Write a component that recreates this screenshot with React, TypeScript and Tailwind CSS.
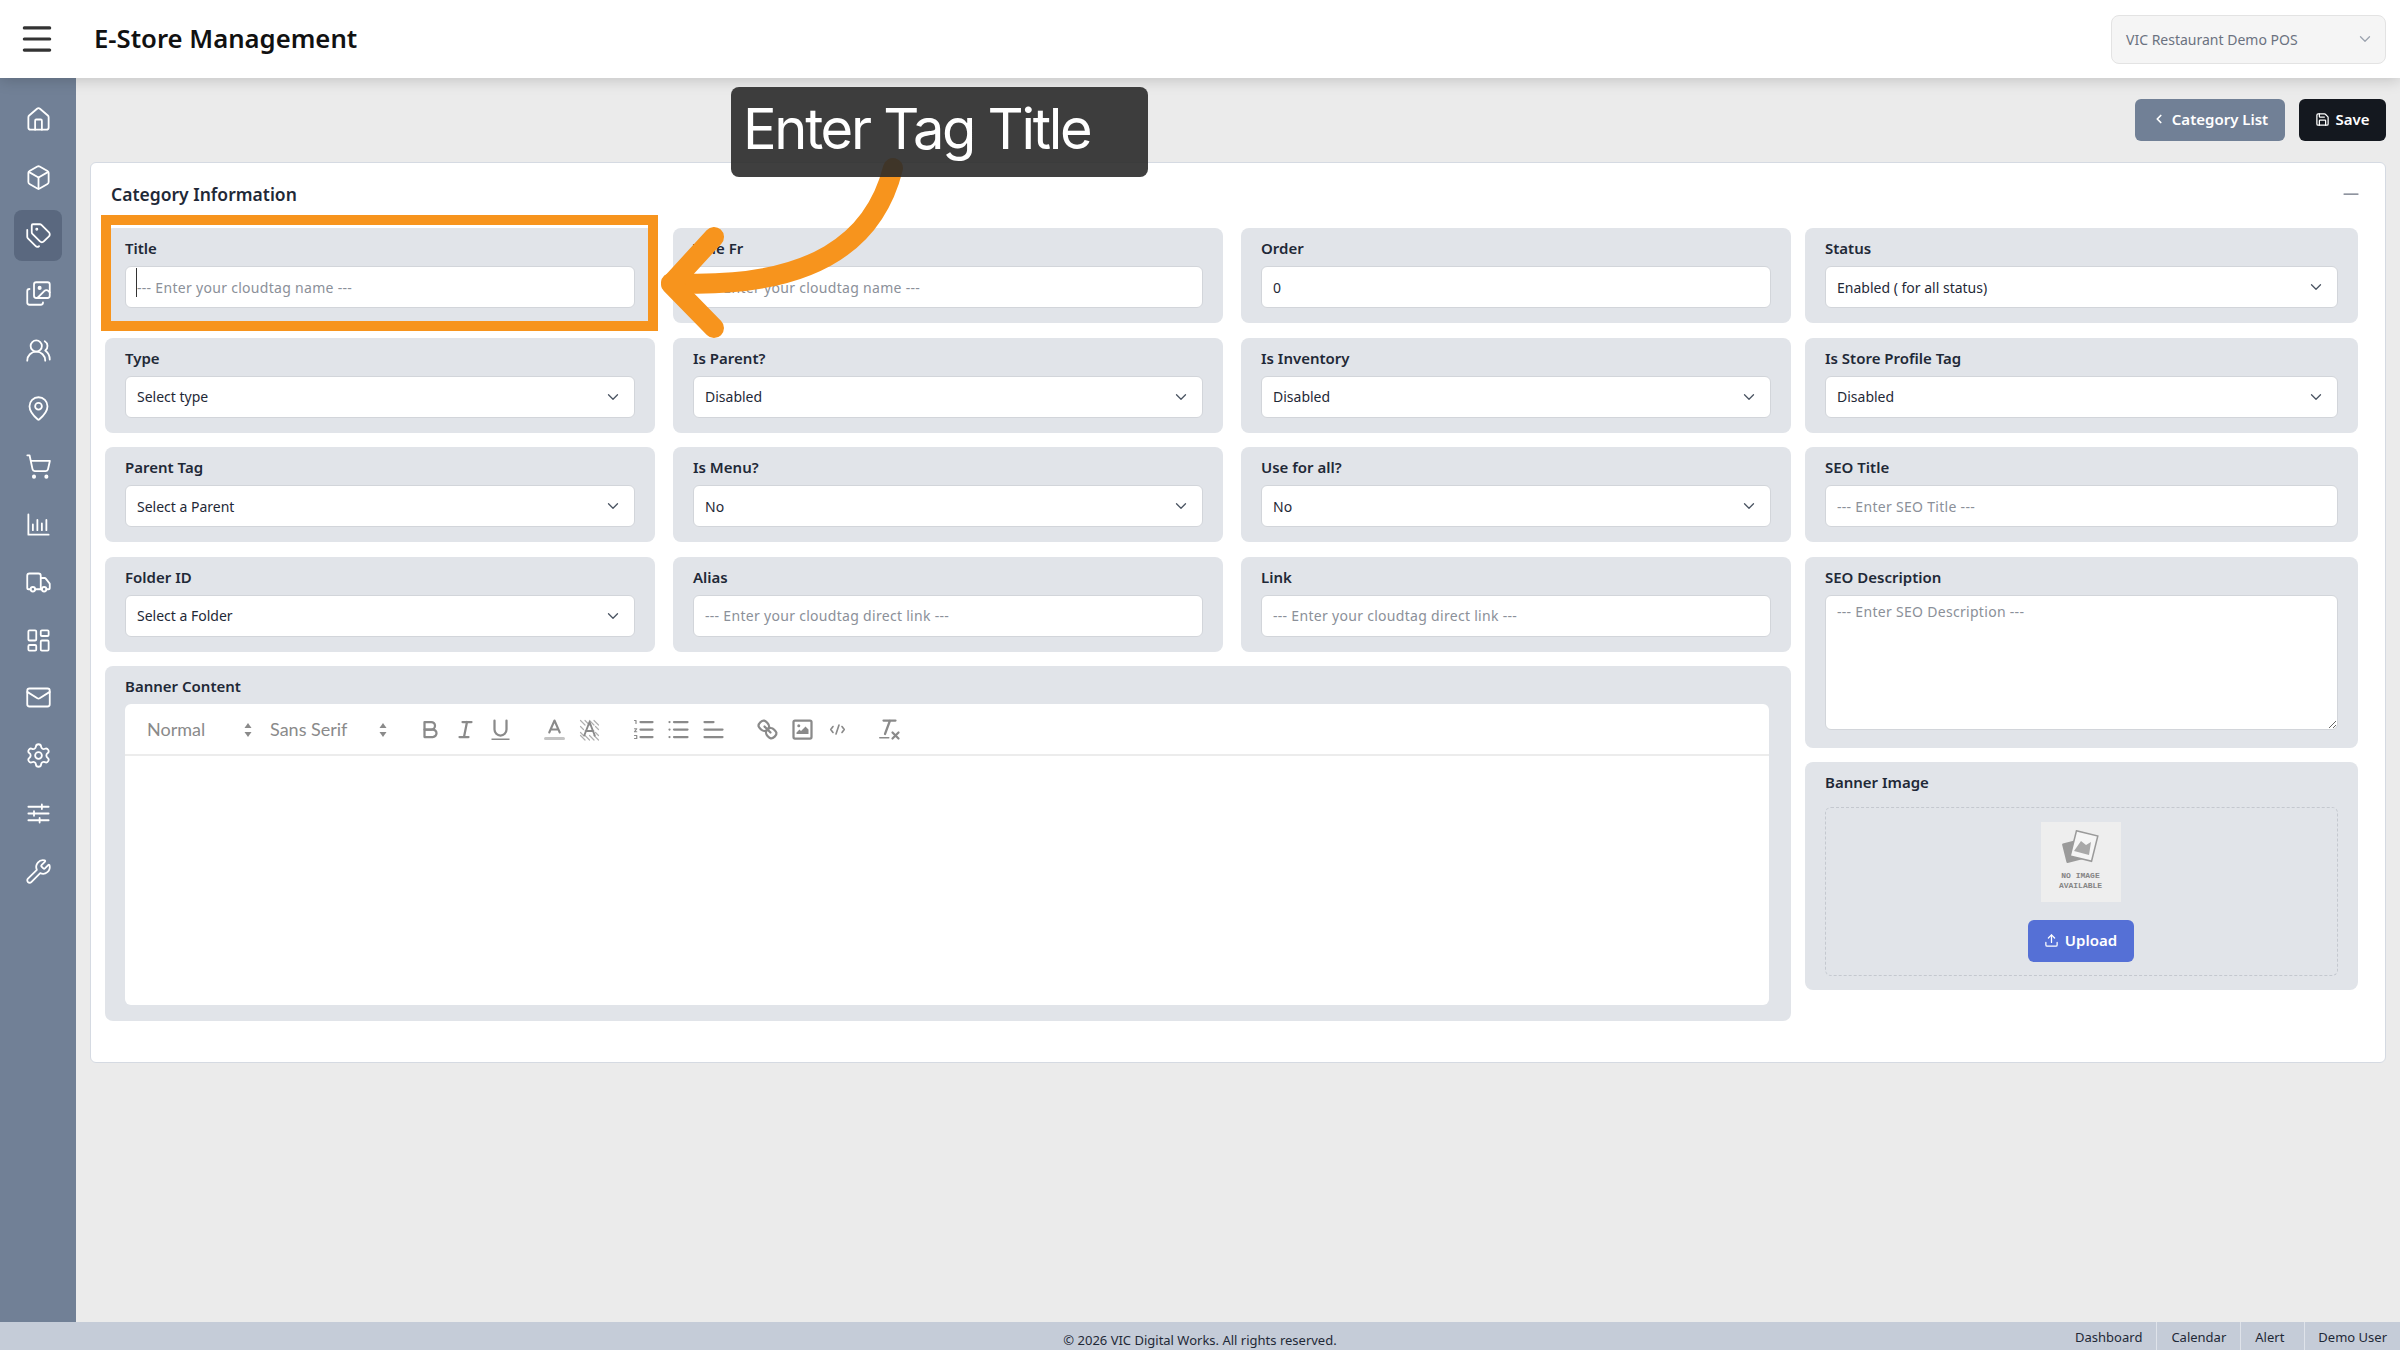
import {
  House,
  Box,
  Tags,
  Images,
  UsersRound,
  MapPin,
  ShoppingCart,
  Truck,
  LayoutDashboard,
  Mail,
  Settings,
  Wrench,
  ChevronDown,
  ChevronLeft,
  Save,
  Upload,
  Menu,
  Minus,
} from 'lucide-react';
import type { ComponentProps, ReactNode } from 'react';

const ChartBars = (props: ComponentProps<'svg'>) => (
  <svg viewBox="0 0 24 24" fill="none" stroke="currentColor" strokeLinecap="round" strokeLinejoin="round" {...props}>
    <path d="M3 3v18h18M7 17v-5M11 17V8M15 17v-6M19 17V8" />
  </svg>
);

const Sliders = (props: ComponentProps<'svg'>) => (
  <svg viewBox="0 0 24 24" fill="none" stroke="currentColor" strokeLinecap="round" strokeLinejoin="round" {...props}>
    <path d="M3 6h18M3 12h18M3 18h18M15 4v4M8 10v4M13 16v4" />
  </svg>
);

const sidebarIcons = [House, Box, Tags, Images, UsersRound, MapPin, ShoppingCart, ChartBars, Truck, LayoutDashboard, Mail, Settings, Sliders, Wrench];

const Cell = ({
  label,
  children,
  className = 'pb-[15px]',
  labelGap = 'mb-[8px]',
}: {
  label: string;
  children: ReactNode;
  className?: string;
  labelGap?: string;
}) => (
  <div className={`rounded-lg bg-[#e1e4e9] px-[20px] pt-[10px] ${className}`}>
    <div className={`h-[20px] text-[15px] leading-[20px] font-semibold text-[#1f2937] ${labelGap}`}>{label}</div>
    {children}
  </div>
);

const TextField = ({ placeholder, value }: { placeholder?: string; value?: string }) => (
  <input
    readOnly
    placeholder={placeholder}
    defaultValue={value}
    className="block h-[42px] w-full rounded-md border border-[#d2d5da] bg-white px-[11px] text-[14px] text-[#1f2937] outline-none placeholder:tracking-[0.3px] placeholder:text-[#8b9099]"
  />
);

const SelectField = ({ value }: { value: string }) => (
  <div className="flex h-[42px] w-full items-center justify-between rounded-md border border-[#d2d5da] bg-white pr-[12px] pl-[11px] text-[14px] text-[#1f2937]">
    <span>{value}</span>
    <ChevronDown className="h-[18px] w-[18px] text-[#4b5563]" strokeWidth={1.75} />
  </div>
);

// toolbar glyphs, same 18x18 grid the quill editor uses
const QIcon = ({ children }: { children: ReactNode }) => (
  <span className="flex w-[35px] justify-center">
    <svg viewBox="0 0 18 18" className="h-[27px] w-[27px]" fill="none" stroke="#8a8a8a" strokeWidth="1.5" strokeLinecap="round" strokeLinejoin="round">
      {children}
    </svg>
  </span>
);

const PickerArrows = () => (
  <svg viewBox="0 0 10 18" className="h-[18px] w-[10px]" fill="#8a8a8a">
    <path d="M5 2 L8.5 7 H1.5 Z" />
    <path d="M5 16 L8.5 11 H1.5 Z" />
  </svg>
);

const Toolbar = () => (
  <div className="flex h-[52px] items-center border-b-2 border-[#ececec] pt-[1px] pl-[22px] text-[18px] text-[#8a8a8a] [font-family:Lato,sans-serif]">
    <div className="flex w-[123px] items-center justify-between pr-[17px]">
      <span>Normal</span>
      <PickerArrows />
    </div>
    <div className="flex w-[143px] items-center justify-between pr-[25px]">
      <span>Sans Serif</span>
      <PickerArrows />
    </div>
    <div className="flex">
      <QIcon>
        <path d="M5,4H9.5A2.5,2.5,0,0,1,12,6.5v0A2.5,2.5,0,0,1,9.5,9H5V4Z" />
        <path d="M5,9h5.5A2.5,2.5,0,0,1,13,11.5v0A2.5,2.5,0,0,1,10.5,14H5V9Z" />
      </QIcon>
      <QIcon>
        <path d="M7 4H13M5 14H11M8 14L10 4" />
      </QIcon>
      <QIcon>
        <path d="M5,3V9a4,4,0,0,0,4,4H9a4,4,0,0,0,4-4V3" />
        <rect x="3" y="15" width="12" height="1" fill="#8a8a8a" stroke="none" />
      </QIcon>
    </div>
    <div className="ml-[19px] flex">
      <QIcon>
        <path d="M5.5 11L9 3L12.5 11M11.6 9H6.4" strokeWidth="1.4" />
        <path d="M3 15H15" stroke="#c4c4c4" strokeWidth="2" />
      </QIcon>
      <QIcon>
        <path d="M3 3L6 6M6 3L9 6M9 3L12 6M12 3L15 6M3 7L5 9M13 7L15 9M3 11L5 13M13 11L15 13M3 13L6 16M6 13L9 16M9 13L12 16M12 13L15 16" stroke="#b0b0b0" strokeWidth="0.8" />
        <path d="M5.5 13L9 4L12.5 13M11.6 10H6.4" strokeWidth="1.3" />
      </QIcon>
    </div>
    <div className="ml-[19px] flex">
      <QIcon>
        <path d="M7 4H15M7 9H15M7 14H15" />
        <path d="M3 3H4V5M3 8.5H4.5L3 10.5H4.5M3 13H4.5V15H3" strokeWidth="0.8" />
      </QIcon>
      <QIcon>
        <path d="M6 4H15M6 9H15M6 14H15M3 4H3.01M3 9H3.01M3 14H3.01" />
      </QIcon>
      <QIcon>
        <path d="M3 4H9M3 9H15M3 14H15" />
      </QIcon>
    </div>
    <div className="ml-[19px] flex">
      <QIcon>
        <path d="M7 7L11 11" />
        <path d="M8.9,4.577a3.476,3.476,0,0,1,.36,4.679A3.476,3.476,0,0,1,4.577,8.9C3.185,7.5,2.035,6.4,4.217,4.217S7.5,3.185,8.9,4.577Z" />
        <path d="M13.423,9.1a3.476,3.476,0,0,0-4.679-.36,3.476,3.476,0,0,0,.36,4.679c1.392,1.392,2.5,2.542,4.679.36S14.815,10.5,13.423,9.1Z" />
      </QIcon>
      <QIcon>
        <rect x="3" y="3" width="12" height="12" rx="1" />
        <circle cx="6.5" cy="6.5" r="1" fill="#8a8a8a" stroke="none" />
        <polyline points="5 12 5 11 7 9 8 10 11 7 13 9 13 12 5 12" fill="#8a8a8a" stroke="none" />
      </QIcon>
      <QIcon>
        <path d="M6 7L4.5 9L6 11M12 7L13.5 9L12 11M10 6L8 12" strokeWidth="1.1" />
      </QIcon>
    </div>
    <div className="ml-[17px] flex">
      <QIcon>
        <path d="M5 3H13M6 12L9.35 3M11 11L15 15M15 11L11 15" />
        <rect x="2" y="14" width="7" height="1" rx="0.5" fill="#8a8a8a" stroke="none" />
      </QIcon>
    </div>
  </div>
);

const NoImage = () => (
  <div className="flex h-[80px] w-[80px] flex-col items-center bg-[#eeeeee] pt-[8px]">
    <svg viewBox="0 0 40 36" className="h-[36px] w-[40px]">
      <rect x="3" y="11" width="20" height="20" rx="1" fill="#9a9a9a" transform="rotate(-14 13 21)" />
      <rect x="12" y="3" width="22" height="26" fill="#f5f5f5" stroke="#9a9a9a" strokeWidth="1.5" transform="rotate(14 23 16)" />
      <path d="M13 21L20 11L25 15L30 12L28 25Z" fill="#a8a8a8" />
    </svg>
    <div className="mt-[5px] text-center text-[8px] leading-[10px] font-bold text-[#858585] [font-family:'Liberation_Mono',monospace]">
      NO IMAGE
      <br />
      AVAILABLE
    </div>
  </div>
);

export default function App() {
  return (
    <div className="relative flex h-[1350px] w-full flex-col overflow-hidden bg-[#ebebeb] [font-family:'Noto_Sans',sans-serif]">
      <header className="relative z-10 flex h-[78px] shrink-0 items-center justify-between bg-white pr-[14px] pl-[18px] shadow-[0_2px_14px_rgba(0,0,0,0.18)]">
        <div className="flex items-center">
          <Menu className="h-[38px] w-[38px] text-[#333333]" strokeWidth={2} />
          <h1 className="ml-[38px] text-[25.7px] font-semibold text-[#111111]">E-Store Management</h1>
        </div>
        <div className="flex h-[49px] w-[275px] items-center justify-between rounded-lg border border-[#e3e3e3] bg-[#f5f5f5] pr-[11px] pl-[14px] text-[14px] text-[#6b7280]">
          <span>VIC Restaurant Demo POS</span>
          <ChevronDown className="h-[18px] w-[18px] text-[#9ca3af]" strokeWidth={1.75} />
        </div>
      </header>

      <div className="flex min-h-0 flex-1">
        <aside className="flex w-[76px] shrink-0 flex-col items-center gap-[6.85px] bg-[#718096] pt-[16px]">
          {sidebarIcons.map((Icon, idx) => (
            <div key={idx} className={`flex h-[51px] w-[48px] items-center justify-center rounded-lg ${idx === 2 ? 'bg-[#5a687f]' : ''}`}>
              <Icon className="h-[27px] w-[27px] text-white" strokeWidth={1.6} />
            </div>
          ))}
        </aside>

        <main className="flex-1 pt-[21px] pr-[14px] pl-[14px]">
          <div className="flex h-[42px] justify-end gap-[14px]">
            <button className="flex w-[150px] items-center justify-center gap-[6px] rounded-md bg-[#718096] pb-[2px] text-[15px] font-semibold text-white">
              <ChevronLeft className="h-[14px] w-[14px]" strokeWidth={3} />
              Category List
            </button>
            <button className="flex w-[87px] items-center justify-center gap-[5px] rounded-md bg-[#14181f] pb-[2px] text-[15px] font-semibold text-white">
              <Save className="h-[15px] w-[15px]" strokeWidth={2} />
              Save
            </button>
          </div>

          <section className="mt-[21px] h-[901px] rounded-md border border-[#d5dae2] bg-white pt-[18px] pr-[27px] pl-[14px]">
            <div className="flex h-[26px] items-center justify-between pl-[6px]">
              <h2 className="text-[17.5px] leading-[26px] font-semibold text-[#1f2937]">Category Information</h2>
              <Minus className="mr-[-5px] h-[24px] w-[24px] text-[#6b7280]" strokeWidth={1.25} />
            </div>

            <div className="mt-[21px] flex gap-[14px]">
              <div className="grid w-[1686px] shrink-0 grid-cols-3 gap-x-[18px] gap-y-[14.5px]">
                <Cell label="Title">
                  <TextField placeholder="--- Enter your cloudtag name ---" />
                </Cell>
                <Cell label="Title Fr">
                  <TextField placeholder="--- Enter your cloudtag name ---" />
                </Cell>
                <Cell label="Order">
                  <TextField value="0" />
                </Cell>
                <Cell label="Type">
                  <SelectField value="Select type" />
                </Cell>
                <Cell label="Is Parent?">
                  <SelectField value="Disabled" />
                </Cell>
                <Cell label="Is Inventory">
                  <SelectField value="Disabled" />
                </Cell>
                <Cell label="Parent Tag">
                  <SelectField value="Select a Parent" />
                </Cell>
                <Cell label="Is Menu?">
                  <SelectField value="No" />
                </Cell>
                <Cell label="Use for all?">
                  <SelectField value="No" />
                </Cell>
                <Cell label="Folder ID">
                  <SelectField value="Select a Folder" />
                </Cell>
                <Cell label="Alias">
                  <TextField placeholder="--- Enter your cloudtag direct link ---" />
                </Cell>
                <Cell label="Link">
                  <TextField placeholder="--- Enter your cloudtag direct link ---" />
                </Cell>
                <Cell label="Banner Content" className="col-span-3 pr-[22px] pb-[16px]">
                  <div className="h-[301px] rounded-md bg-white">
                    <Toolbar />
                  </div>
                </Cell>
              </div>

              <div className="flex flex-1 flex-col gap-[14.5px]">
                <Cell label="Status">
                  <SelectField value="Enabled ( for all status)" />
                </Cell>
                <Cell label="Is Store Profile Tag">
                  <SelectField value="Disabled" />
                </Cell>
                <Cell label="SEO Title">
                  <TextField placeholder="--- Enter SEO Title ---" />
                </Cell>
                <Cell label="SEO Description" className="pb-[18px]">
                  <textarea
                    readOnly
                    placeholder="--- Enter SEO Description ---"
                    className="block h-[135px] w-full rounded-md border border-[#d2d5da] bg-white px-[11px] py-[5px] text-[14px] outline-none placeholder:tracking-[0.3px] placeholder:text-[#8b9099]"
                  />
                </Cell>
                <Cell label="Banner Image" className="pb-[14px]" labelGap="mb-[15px]">
                  <div className="flex h-[169px] flex-col items-center rounded-md border border-dashed border-[#c4c8cf] pt-[14px] pr-[2px]">
                    <NoImage />
                    <button className="mt-[18px] flex h-[42px] w-[106px] items-center justify-center gap-[6px] rounded-md bg-[#5570d6] pb-[2px] text-[15px] font-semibold text-white">
                      <Upload className="h-[15px] w-[15px]" strokeWidth={2} />
                      Upload
                    </button>
                  </div>
                </Cell>
              </div>
            </div>
          </section>
        </main>
      </div>

      <footer className="grid h-[28px] shrink-0 grid-cols-[1fr_auto_1fr] bg-[#c5ccd8] text-[13px] text-[#1f2937]">
        <div />
        <div className="pt-[9px] leading-[18px]">© 2026 VIC Digital Works. All rights reserved.</div>
        <div className="flex justify-end">
          <span className="border-r border-[#dfe3ea] px-[14px] pt-[6px] leading-[18px]">Dashboard</span>
          <span className="border-r border-[#dfe3ea] px-[14px] pt-[6px] leading-[18px]">Calendar</span>
          <span className="border-r border-[#dfe3ea] pt-[6px] pr-[20px] pl-[14px] leading-[18px]">Alert</span>
          <span className="px-[13px] pt-[6px] leading-[18px]">Demo User</span>
        </div>
      </footer>

      {/* tutorial annotation over the page */}
      <div className="absolute top-[215px] left-[101px] z-20 h-[116px] w-[557px] border-[10px] border-[#f7941d]" />
      <div className="absolute top-[268px] left-[136px] z-20 h-[29px] w-px bg-[#333333]" />
      <svg className="absolute top-0 left-0 z-20 h-[1350px] w-[2400px]" viewBox="0 0 2400 1350" fill="none" stroke="#f7941d" strokeWidth="20" strokeLinecap="round" strokeLinejoin="round">
        <path d="M893 168C875 240 815 290 671 283" />
        <path d="M714 237L671 284L714 328" />
      </svg>
      <div className="absolute top-[87px] left-[731px] z-30 flex h-[90px] w-[417px] items-start rounded-lg bg-[#2a2a2a]/90 pt-[8px] pl-[12px] text-[56px] leading-[68px] tracking-[-2.3px] text-white [font-family:Inter,sans-serif]">
        Enter Tag Title
      </div>
    </div>
  );
}
